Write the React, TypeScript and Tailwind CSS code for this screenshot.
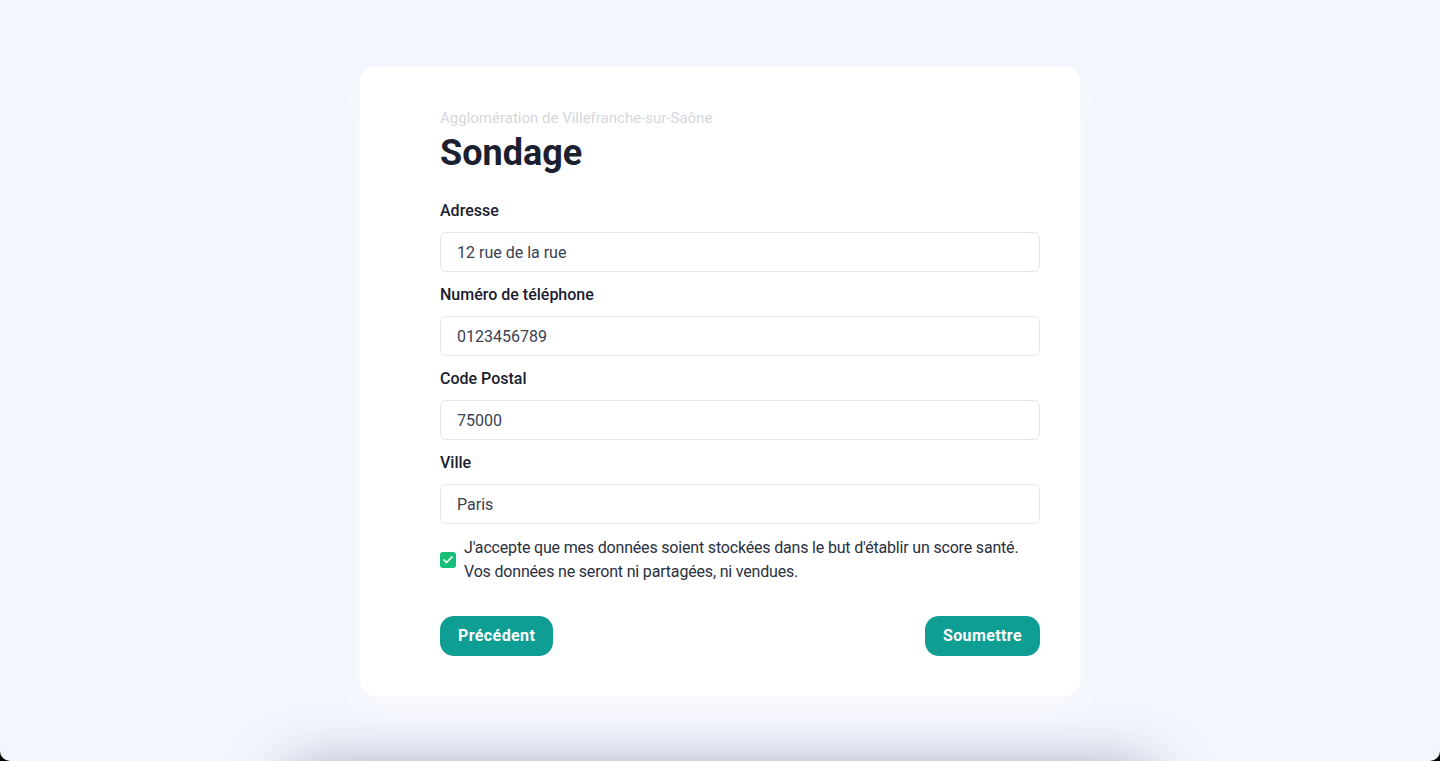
import { Check } from "lucide-react";

const fields = [
  { label: "Adresse", value: "12 rue de la rue" },
  { label: "Numéro de téléphone", value: "0123456789" },
  { label: "Code Postal", value: "75000" },
  { label: "Ville", value: "Paris" },
];

export default function App() {
  return (
    <div className="bg-black h-[761px] w-full">
      <div
        className="h-[761px] w-full overflow-hidden rounded-b-[10px] bg-[#f3f6fe] flex flex-col items-center pt-[66px]"
        style={{ fontFamily: "Roboto, 'Noto Sans', sans-serif" }}
      >
        {/* CARD */}
        <div className="w-[720px] bg-white rounded-2xl pl-20 pr-10 pt-[42px] pb-10 shrink-0 shadow-[0_20px_40px_rgba(255,255,255,0.5)]">
          <p className="text-[15px] leading-5 text-[#d4d7dd]">Agglomération de Villefranche-sur-Saône</p>
          <h1 className="mt-[5px] text-[36px] leading-10 font-bold text-[#1a2030]">Sondage</h1>

          <div className="mt-[26px] flex flex-col gap-[11px]">
            {fields.map((f) => (
              <div key={f.label}>
                <label className="block text-base leading-6 font-medium text-[#1a2030] mb-[9px]">{f.label}</label>
                <input
                  readOnly
                  value={f.value}
                  className="w-full h-10 rounded-md border border-[#e3e8ef] px-4 text-base text-[#3a4151] outline-none"
                />
              </div>
            ))}
          </div>

          {/* CONSENT */}
          <div className="mt-3 flex items-center gap-2">
            <span className="w-4 h-4 rounded-[3px] bg-[#16bf78] flex items-center justify-center shrink-0">
              <Check className="w-3 h-3 text-white" strokeWidth={3.5} />
            </span>
            <p className="text-base leading-6 text-[#2a3040] tracking-[-0.18px]">
              J'accepte que mes données soient stockées dans le but d'établir un score santé.
              <br />
              Vos données ne seront ni partagées, ni vendues.
            </p>
          </div>

          {/* ACTIONS */}
          <div className="mt-8 flex justify-between">
            <button className="h-10 px-[18px] rounded-[14px] bg-[#0f9e94] text-white font-bold text-base tracking-[0.4px]">Précédent</button>
            <button className="h-10 px-[18px] rounded-[14px] bg-[#0f9e94] text-white font-bold text-base tracking-[0.4px]">Soumettre</button>
          </div>
        </div>

        {/* next section peeking from below */}
        <div className="mt-[80px] w-[860px] h-40 shrink-0 bg-white rounded-2xl shadow-[0_0_60px_rgba(20,30,60,0.5)]" />
      </div>
    </div>
  );
}
